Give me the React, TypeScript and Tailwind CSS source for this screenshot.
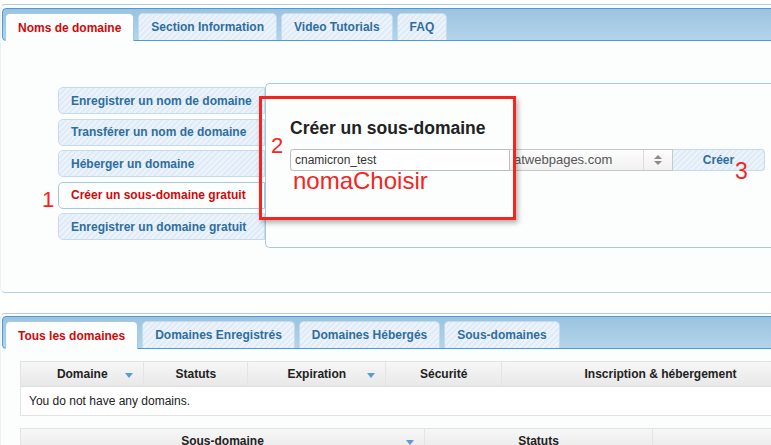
import React from "react";

const stripe =
  "bg-[repeating-linear-gradient(135deg,#e0ebf8_0px,#e0ebf8_2px,#ecf3fb_2px,#ecf3fb_4px)]";

function Tabs({ items, active }: { items: string[]; active: number }) {
  return (
    <div className="h-[33px] border border-[#4c9ad6] rounded-[4px] bg-gradient-to-b from-[#9bc3df] to-[#b3d4eb] flex items-end gap-[4px] px-[2px]">
      {items.map((t, i) =>
        i === active ? (
          <div
            key={t}
            className="h-[28px] -mb-px px-[12px] flex items-center rounded-t-[5px] border border-b-0 border-[#a6c9e2] bg-[#fcfdfd] text-[#cd0a0a] text-[12px] font-bold"
          >
            {t}
          </div>
        ) : (
          <div
            key={t}
            className={`h-[27px] px-[12px] flex items-center rounded-t-[5px] border border-b-0 border-[#c5dbec] ${stripe} text-[#2e6e9e] text-[12px] font-bold`}
          >
            {t}
          </div>
        )
      )}
    </div>
  );
}

const SortArrow = () => (
  <svg width="8" height="5" viewBox="0 0 8 5" className="absolute right-[10px] top-[11px]">
    <path d="M0 0h8L4 5z" fill="#5b9ad8" />
  </svg>
);

interface ColProps {
  title: string;
  width: number;
  sort?: boolean;
  first?: boolean;
}
const HeadCell = ({ title, width, sort, first }: ColProps) => (
  <div
    className={`relative h-full flex items-center justify-center font-bold text-[12px] text-[#222] ${
      first ? "" : "border-l border-[#e4e4e4]"
    }`}
    style={{ width }}
  >
    {title}
    {sort && <SortArrow />}
  </div>
);

const menu = [
  "Enregistrer un nom de domaine",
  "Transférer un nom de domaine",
  "Héberger un domaine",
  "Créer un sous-domaine gratuit",
  "Enregistrer un domaine gratuit",
];

export default function App() {
  return (
    <div className="relative w-[771px] h-[445px] overflow-hidden bg-white font-['Liberation_Sans',Arial,sans-serif]">
      {/* * Upper widget */}
      <div className="w-[800px] mt-[4px] border border-[#aed0ea] border-l-[#eaf2f9] rounded-[5px] bg-[#fcfdfd] pt-[3px] px-[1px]">
        <Tabs
          items={["Noms de domaine", "Section Information", "Video Tutorials", "FAQ"]}
          active={0}
        />
        <div className="flex items-start pt-[42px] pl-[56px] pb-[44px]">
          <div className="w-[207px] mt-[4px] flex flex-col gap-[4.5px]">
            {menu.map((m, i) => (
              <div
                key={m}
                className={
                  i === 3
                    ? "h-[27px] flex items-center pl-[12px] rounded-l-[5px] border border-[#a6c9e2] bg-[#fcfdfd] text-[#cd0a0a] text-[12px] font-bold"
                    : `h-[27px] flex items-center pl-[12px] rounded-l-[5px] border border-[#c5dbec] ${stripe} text-[#2e6e9e] text-[12px] font-bold`
                }
              >
                {m}
              </div>
            ))}
          </div>
          <div className="flex-1 h-[165px] border border-r-0 border-[#a6c9e2] rounded-l-[5px] bg-[#fcfdfd] pl-[24px] pt-[34px]">
            <div className="text-[17.5px] leading-[20px] font-bold text-[#222]">
              Créer un sous-domaine
            </div>
            <div className="mt-[11px] flex h-[22px]">
              <div className="w-[220px] h-full border border-[#bdbdbd] rounded-l-[3px] bg-white flex items-center pl-[4px] text-[12px] text-[#333]">
                cnamicron_test
              </div>
              <div className="w-[163px] h-full border border-l-0 border-[#c8c8c8] bg-gradient-to-b from-[#fdfdfd] to-[#f1f1f1] flex items-center">
                <span className="flex-1 pl-[4px] text-[13px] text-[#555]">atwebpages.com</span>
                <div className="w-[29px] h-full border-l border-[#dcdcdc] flex items-center justify-center">
                  <svg width="8" height="12" viewBox="0 0 8 12">
                    <path d="M0 5L4 1L8 5Z" fill="#8a8a8a" />
                    <path d="M0 7L8 7L4 11Z" fill="#8a8a8a" />
                  </svg>
                </div>
              </div>
              <div
                className={`w-[92px] h-full border border-l-0 border-[#c5dbec] rounded-r-[4px] ${stripe} flex items-center justify-center text-[12px] font-bold text-[#2e6e9e]`}
              >
                Créer
              </div>
            </div>
          </div>
        </div>
      </div>

      {/* * Lower widget */}
      <div className="w-[800px] h-[200px] mt-[20px] border border-[#aed0ea] border-l-[#eaf2f9] rounded-[5px] bg-[#fcfdfd] pt-[2px] px-[1px]">
        <Tabs
          items={["Tous les domaines", "Domaines Enregistrés", "Domaines Hébergés", "Sous-domaines"]}
          active={0}
        />
        <div className="pt-[12px] pl-[18px]">
          <div className="w-[800px] border border-[#e3e3e3] bg-white">
            <div className="h-[25px] flex bg-gradient-to-b from-[#f7f7f7] to-[#e8e8e8] border-b border-[#dedede]">
              <HeadCell title="Domaine" width={124} sort first />
              <HeadCell title="Statuts" width={105} />
              <HeadCell title="Expiration" width={140} sort />
              <HeadCell title="Sécurité" width={117} />
              <HeadCell title="Inscription & hébergement" width={322} />
            </div>
            <div className="h-[28px] flex items-center pl-[8px] text-[12px] text-[#222]">
              You do not have any domains.
            </div>
          </div>
          <div className="w-[800px] mt-[12px] border border-[#e3e3e3] bg-white">
            <div className="h-[25px] flex bg-gradient-to-b from-[#f7f7f7] to-[#e8e8e8] border-b border-[#dedede]">
              <HeadCell title="Sous-domaine" width={403} sort first />
              <HeadCell title="Statuts" width={228} />
              <HeadCell title="" width={160} />
            </div>
          </div>
        </div>
      </div>

      {/* * Annotations */}
      <div className="absolute left-[259px] top-[96px] w-[257px] h-[124px] border-[3px] border-[#f4251f] shadow-[2px_3px_5px_rgba(0,0,0,0.3)] pointer-events-none" />
      <div className="absolute left-[271px] top-[135px] text-[22px] leading-[22px] text-[#f4251f]">2</div>
      <div className="absolute left-[42px] top-[189px] text-[22px] leading-[22px] text-[#f4251f]">1</div>
      <div className="absolute left-[735px] top-[160px] text-[23px] leading-[23px] text-[#f4251f]">3</div>
      <div className="absolute left-[293px] top-[173px] text-[24px] leading-[16px] text-[#f4251f]">nomaChoisir</div>
    </div>
  );
}
